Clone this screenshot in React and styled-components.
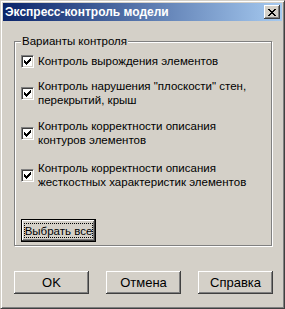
import styled, { createGlobalStyle } from 'styled-components'

const GlobalStyle = createGlobalStyle`
  html, body {
    margin: 0;
    padding: 0;
    background: #d4d0c8;
  }
  body {
    font-family: "Liberation Sans", Arial, sans-serif;
    font-size: 11.5px;
    color: #000;
  }
`

const Window = styled.div`
  width: 285px;
  height: 309px;
  box-sizing: border-box;
  background: #d4d0c8;
  border: 1px solid;
  border-color: #d4d0c8 #404040 #404040 #d4d0c8;
  box-shadow: inset 1px 1px #fff, inset -1px -1px #808080;
  padding: 2px;
  display: flex;
  flex-direction: column;
`

const TitleBar = styled.div`
  height: 18px;
  flex-shrink: 0;
  display: flex;
  align-items: center;
  justify-content: space-between;
  padding-left: 2px;
  background: linear-gradient(to right, #0a246a, #a6caf0);
`

const Title = styled.div`
  color: #fff;
  font-weight: bold;
  font-size: 12px;
  line-height: 18px;
  white-space: nowrap;
`

const CloseButton = styled.div`
  width: 16px;
  height: 14px;
  margin-right: 2px;
  background: #d4d0c8;
  box-shadow: inset -1px -1px #404040, inset 1px 1px #fff, inset -2px -2px #808080;
  display: flex;
  align-items: center;
  justify-content: center;
`

const Body = styled.div`
  flex: 1;
  display: flex;
  flex-direction: column;
  padding: 13px 9px 0 11px;
`

const Group = styled.fieldset`
  margin: 0;
  width: 258px;
  box-sizing: border-box;
  padding: 0 0 3px 6px;
  border: 1px solid #808080;
  box-shadow: inset 1px 1px #fff, 1px 1px #fff;
  display: flex;
  flex-direction: column;
  align-items: flex-start;
`

const Legend = styled.legend`
  padding: 0 1px;
  margin: 0;
  line-height: 14px;
  background: #d4d0c8;
`

const Row = styled.label`
  display: flex;
  align-items: center;
  gap: 4px;
  margin-top: ${({ $top }) => $top}px;
`

const Box = styled.span`
  width: 13px;
  height: 13px;
  flex-shrink: 0;
  box-sizing: border-box;
  background: #fff;
  border: 1px solid;
  border-color: #808080 #fff #fff #808080;
  box-shadow: inset 1px 1px #404040, inset -1px -1px #d4d0c8;
  display: flex;
  align-items: center;
  justify-content: center;
`

const RowText = styled.span`
  line-height: 14px;
  white-space: pre;
`

const Button = styled.div`
  width: 75px;
  height: 23px;
  box-sizing: border-box;
  background: #d4d0c8;
  display: flex;
  align-items: center;
  justify-content: center;
  white-space: nowrap;
  box-shadow: inset -1px -1px #404040, inset 1px 1px #fff, inset -2px -2px #808080;
  font-size: ${({ $default }) => ($default ? '11.5px' : '13px')};
  ${({ $default }) =>
    $default &&
    `
    border: 1px solid #000;
    padding: 3px;
    margin-top: 30px;
  `}
`

const Focus = styled.span`
  flex: 1;
  align-self: stretch;
  display: flex;
  align-items: center;
  justify-content: center;
  border: 1px dotted #000;
`

const ButtonRow = styled.div`
  display: flex;
  justify-content: space-between;
  margin-top: 25px;
`

const Check = () => (
  <svg width="7" height="7" viewBox="0 0 7 7" shapeRendering="crispEdges">
    <path
      d="M6 0h1v3h-1z M5 1h1v3h-1z M4 2h1v3h-1z M3 3h1v3h-1z M2 4h1v3h-1z M1 3h1v3h-1z M0 2h1v3h-1z"
      fill="#000"
    />
  </svg>
)

const CloseGlyph = () => (
  <svg width="8" height="7" viewBox="0 0 8 7" shapeRendering="crispEdges">
    <path
      d="M0 0h2v1h-2z M6 0h2v1h-2z M1 1h2v1h-2z M5 1h2v1h-2z M2 2h4v1h-4z M3 3h2v1h-2z M2 4h4v1h-4z M1 5h2v1h-2z M5 5h2v1h-2z M0 6h2v1h-2z M6 6h2v1h-2z"
      fill="#000"
    />
  </svg>
)

const OPTIONS = [
  { top: 6, label: 'Контроль вырождения элементов' },
  { top: 11, label: 'Контроль нарушения "плоскости" стен,\nперекрытий, крыш' },
  { top: 12, label: 'Контроль корректности описания\nконтуров элементов' },
  { top: 14, label: 'Контроль корректности описания\nжесткостных характеристик элементов' },
]

const App = () => {
  return (
    <>
      <GlobalStyle />
      <Window>
        <TitleBar>
          <Title>Экспресс-контроль модели</Title>
          <CloseButton>
            <CloseGlyph />
          </CloseButton>
        </TitleBar>
        <Body>
          <Group>
            <Legend>Варианты контроля</Legend>
            {OPTIONS.map(({ top, label }) => (
              <Row key={label} $top={top}>
                <Box>
                  <Check />
                </Box>
                <RowText>{label}</RowText>
              </Row>
            ))}
            <Button $default>
              <Focus>Выбрать все</Focus>
            </Button>
          </Group>
          <ButtonRow>
            <Button>OK</Button>
            <Button>Отмена</Button>
            <Button>Справка</Button>
          </ButtonRow>
        </Body>
      </Window>
    </>
  )
}

export default App
